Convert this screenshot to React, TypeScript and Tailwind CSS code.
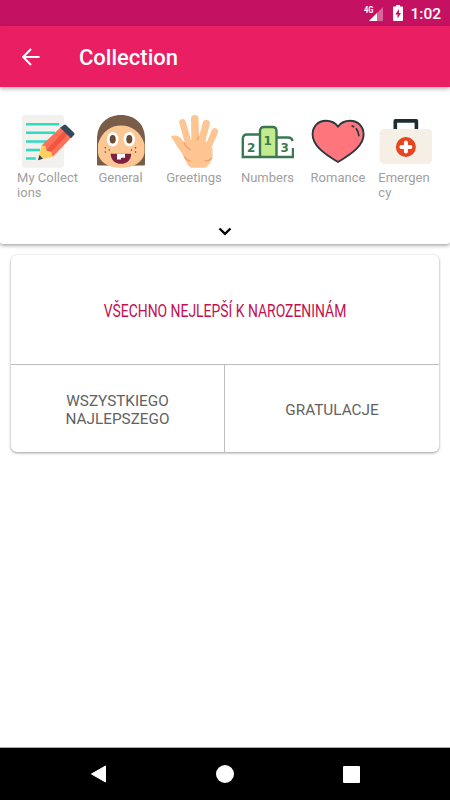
import React from "react";

interface Category {
  label: string[];
  cell: string;
  icon: React.ReactNode;
}

function NotesIcon() {
  return (
    <svg viewBox="0 0 54 54" className="h-[54px] w-[54px]">
      <rect x="1" y="1" width="42" height="52.7" rx="2.2" fill="#f2f1ed" />
      <path d="M5 10.2h33.2M5 18.8h29M5 27.5h22M5 36h14M5 44.5h9.8" stroke="#2fdcc0" strokeWidth="2.6" />
      <path d="M39.2 13.8 50 23.8 31.8 42.8 20.6 31.6z" fill="#ff7058" />
      <path d="M43 17.2 46.5 20.6 29 39l-4-2.5z" fill="#f1543f" />
      <path d="M20.6 31.6 24.3 32.1 25.4 36.6 30.2 37.8 31.8 42.8 17 46z" fill="#ffd15c" />
      <path d="M18.4 41 22 44.8 17 46.2z" fill="#334a5e" />
      <path d="M42.8 11q1-1 2.2 0l8 7.8q1.1 1.1 0 2.2l-3 3.2L39 13.8z" fill="#334a5e" />
    </svg>
  );
}

function FaceIcon() {
  return (
    <svg viewBox="0 0 54 54" className="h-[54px] w-[54px]">
      <path d="M3 50.5V25C3 10 13 1 27 1s24 9 24 24v25.5q0 1-1 1H4q-1 0-1-1z" fill="#7a5d49" />
      <path d="M4 30C8 17 17 11.5 27 11.5S46.500 17 50.5 30v9C49 48 40 53.700 27 53.700S5 48 4 39z" fill="#fdc794" />
      <ellipse cx="18.7" cy="25.3" rx="5.8" ry="7.2" fill="#fff" />
      <ellipse cx="35.3" cy="25.3" rx="5.8" ry="7.2" fill="#fff" />
      <ellipse cx="18.7" cy="25.3" rx="3" ry="4.3" fill="#6b4b35" />
      <ellipse cx="35.3" cy="25.3" rx="3" ry="4.3" fill="#6b4b35" />
      <g fill="#6b4b35">
        <circle cx="11.3" cy="33.7" r=".8" />
        <circle cx="15.3" cy="36" r=".8" />
        <circle cx="11.3" cy="38" r=".8" />
        <circle cx="41.5" cy="33.7" r=".8" />
        <circle cx="37.5" cy="36" r=".8" />
        <circle cx="41.5" cy="38" r=".8" />
      </g>
      <path d="M16.7 39.7h20.5c0 6-4 10.1-10.2 10.1s-10.3-4.1-10.3-10.1z" fill="#7e2141" />
      <path d="M23 39.7h8v4h-4v1.7h-4z" fill="#fff" />
    </svg>
  );
}

function HandIcon() {
  return (
    <svg viewBox="0 0 54 54" className="h-[54px] w-[54px]">
      <g fill="none" stroke="#fdc591" strokeLinecap="round">
        <path d="M15.5 8.3 22 31" strokeWidth="6.6" />
        <path d="M27.8 4.8 28.3 31" strokeWidth="7.6" />
        <path d="M39.3 9.5 33.5 31" strokeWidth="7.2" />
        <path d="M47.8 17.5 40 36" strokeWidth="6.6" />
      </g>
      <path d="M4 23q0-1.5 2.5-1.5Q11.500 21 14.5 25q2 3 4.5 4.5V26h19l7.500 9q.5 6-.5 10-2 5-6.500 8.700H24q-4-2.500-5.500-7.700Q14 37 9.500 31.500 6.500 26 4 23z" fill="#fdc591" />
      <path d="M17 28.5q1.5 4.5 6.5 7.3M17.5 43q1.500 3 5.500 4M31.300 22.500q-1 1.500-.5 3.200M38 46.700q4 .8 6.800-2.500" fill="none" stroke="#f99c6c" strokeWidth="1.3" strokeLinecap="round" />
    </svg>
  );
}

function PodiumIcon() {
  return (
    <svg viewBox="0 0 54 54" className="h-[54px] w-[54px]">
      <path d="M20 43V17q0-4 4-4h8.5q4 0 4 4v26z" fill="#c3ea8d" />
      <path d="M20 43V17q0-4 4-4h8.5q4 0 4 4v26M20 20.500H7q-4.200 0-4.200 4.200V43H53V34M36.500 23.500H48q4 0 4.500 3.500" fill="none" stroke="#3a7850" strokeWidth="2.4" />
      <g fill="#3a7850" fontFamily="DejaVu Sans" fontWeight="700" fontSize="12" textAnchor="middle">
        <text x="11.3" y="38">2</text>
        <text x="27.8" y="31">1</text>
        <text x="44.6" y="38">3</text>
      </g>
    </svg>
  );
}

function HeartIcon() {
  return (
    <svg viewBox="0 0 54 54" className="h-[54px] w-[54px]">
      <path d="M27 12.700C24 8.500 20 6.800 15 6.800 7 6.800 1.600 12.500 1.600 20.500 1.600 31 12 39 27 48 42 39 52.600 31 52.600 20.500c0-8-5.600-13.700-13.600-13.700-5 0-9 1.700-12 5.900z" fill="#ff757c" stroke="#28383f" strokeWidth="1.9" strokeLinejoin="round" />
      <path d="M41.2 12l1.4.6M45.300 14.800q2.400 2.600 2.500 6.700" fill="none" stroke="#28383f" strokeWidth="1.8" strokeLinecap="round" />
    </svg>
  );
}

function FirstAidIcon() {
  return (
    <svg viewBox="0 0 54 54" className="h-[54px] w-[54px]">
      <path d="M16.300 15.500V6.900h21.100v8.600" fill="none" stroke="#1f2d33" strokeWidth="3.6" strokeLinejoin="round" />
      <rect x=".6" y="15" width="52.5" height="35" rx="4.5" fill="#f6efe6" />
      <circle cx="26.9" cy="33" r="10" fill="#e8451f" />
      <path d="M26.900 28.500v9M22.400 33h9" stroke="#fff" strokeWidth="4" strokeLinecap="round" />
    </svg>
  );
}

const categories: Category[] = [
  { label: ["My Collect", "ions"], cell: "w-[73px]", icon: <NotesIcon /> },
  { label: ["General"], cell: "w-[73px]", icon: <FaceIcon /> },
  { label: ["Greetings"], cell: "w-[73px] [&>div]:ml-px", icon: <HandIcon /> },
  { label: ["Numbers"], cell: "w-[73px] [&>div]:ml-0.5", icon: <PodiumIcon /> },
  { label: ["Romance"], cell: "w-[69px] [&>div]:ml-px", icon: <HeartIcon /> },
  { label: ["Emergen", "cy"], cell: "w-[67px] [&>div]:-ml-[3px]", icon: <FirstAidIcon /> },
];

function StatusBar() {
  return (
    <div className="flex h-[26px] items-center justify-end bg-[#c51162] pr-[9px] text-white">
      <svg viewBox="0 0 22 18" className="h-[18px] w-[22px]">
        <path d="M20 3v14H6z" fill="#fff" fillOpacity=".35" />
        <path d="M14 9v8H6z" fill="#fff" />
        <text x="1" y="8.7" fill="#fff" fontFamily="Roboto" fontWeight="700" fontSize="8.5" textLength="9.5" lengthAdjust="spacingAndGlyphs">4G</text>
      </svg>
      <svg viewBox="0 0 10 16" className="ml-[8px] h-4 w-2.5">
        <path d="M3 0h4v1.500h2q1 0 1 1V15q0 1-1 1H1q-1 0-1-1V2.500q0-1 1-1h2z" fill="#fff" />
        <path d="M6 4 2.300 9.500h2.200V13.500L8 8H6z" fill="#c51162" />
      </svg>
      <span className="mt-[3px] ml-[7px] text-[15.5px] leading-none font-medium">1:02</span>
    </div>
  );
}

export default function App() {
  return (
    <div className="flex h-[800px] w-[450px] flex-col bg-white font-['Roboto',sans-serif]">
      <StatusBar />

      {/* Toolbar */}
      <header className="relative z-10 flex h-[61px] items-center bg-[#e91e63] pl-[22px] text-white shadow-[0_2px_4px_rgba(0,0,0,0.3)]">
        <svg viewBox="0 0 18 18" className="h-[18px] w-[18px]">
          <path d="M17.500 9H1.500M9 1 1.200 9 9 17" fill="none" stroke="#fff" strokeWidth="2" />
        </svg>
        <h1 className="mt-[2px] ml-[39px] text-[22px] leading-none font-medium">Collection</h1>
      </header>

      {/* Categories */}
      <section className="flex h-[157px] flex-col items-center rounded-b-[3px] bg-white pt-[27px] shadow-[0_1px_4px_rgba(0,0,0,0.45)]">
        <div className="flex w-[428px] justify-center">
          {categories.map((category) => (
            <div key={category.label[0]} className={`flex flex-col items-center ${category.cell}`}>
              {category.icon}
              <div className="mt-[2px] text-[13px] leading-[15px] whitespace-nowrap text-[#a0a0a0]">
                {category.label.map((line) => (
                  <div key={line}>{line}</div>
                ))}
              </div>
            </div>
          ))}
        </div>
        <svg viewBox="0 0 14 9" className="mt-auto mb-2 h-[9px] w-3.5">
          <path d="M1.500 1.500 7 6.800l5.500-5.300" fill="none" stroke="#000" strokeWidth="2.3" />
        </svg>
      </section>

      {/* Phrase card */}
      <main className="flex-1 px-[11px] pt-[11px]">
        <div className="flex h-[197px] flex-col rounded-[6px] bg-white shadow-[0_1px_3px_rgba(0,0,0,0.4)]">
          <div className="flex h-[110px] items-center justify-center border-b border-[#bdbdbd] pt-[3px]">
            <p className="origin-center scale-x-[0.773] text-[18px] leading-none whitespace-nowrap text-[#c2104f]">
              VŠECHNO NEJLEPŠÍ K NAROZENINÁM
            </p>
          </div>
          <div className="flex flex-1 text-[15.3px] leading-[18px] text-[#626262]">
            <div className="flex w-[214px] items-center justify-center border-r border-[#bdbdbd] pt-[2px] text-center">
              <p>
                WSZYSTKIEGO
                <br />
                NAJLEPSZEGO
              </p>
            </div>
            <div className="flex flex-1 items-center justify-center pt-[2px]">
              <p>GRATULACJE</p>
            </div>
          </div>
        </div>
      </main>

      {/* Navigation bar */}
      <nav className="flex h-[53px] items-center border-t border-[#aaa] bg-black pl-[90px]">
        <svg viewBox="0 0 18 18" className="h-[18px] w-[18px]">
          <path d="M15.500 1v16L1.500 9z" fill="#fff" stroke="#fff" strokeLinejoin="round" />
        </svg>
        <div className="ml-[108px] h-[18px] w-[18px] rounded-full bg-white" />
        <div className="ml-[109px] h-[17px] w-[17px] rounded-[1px] bg-white" />
      </nav>
    </div>
  );
}
